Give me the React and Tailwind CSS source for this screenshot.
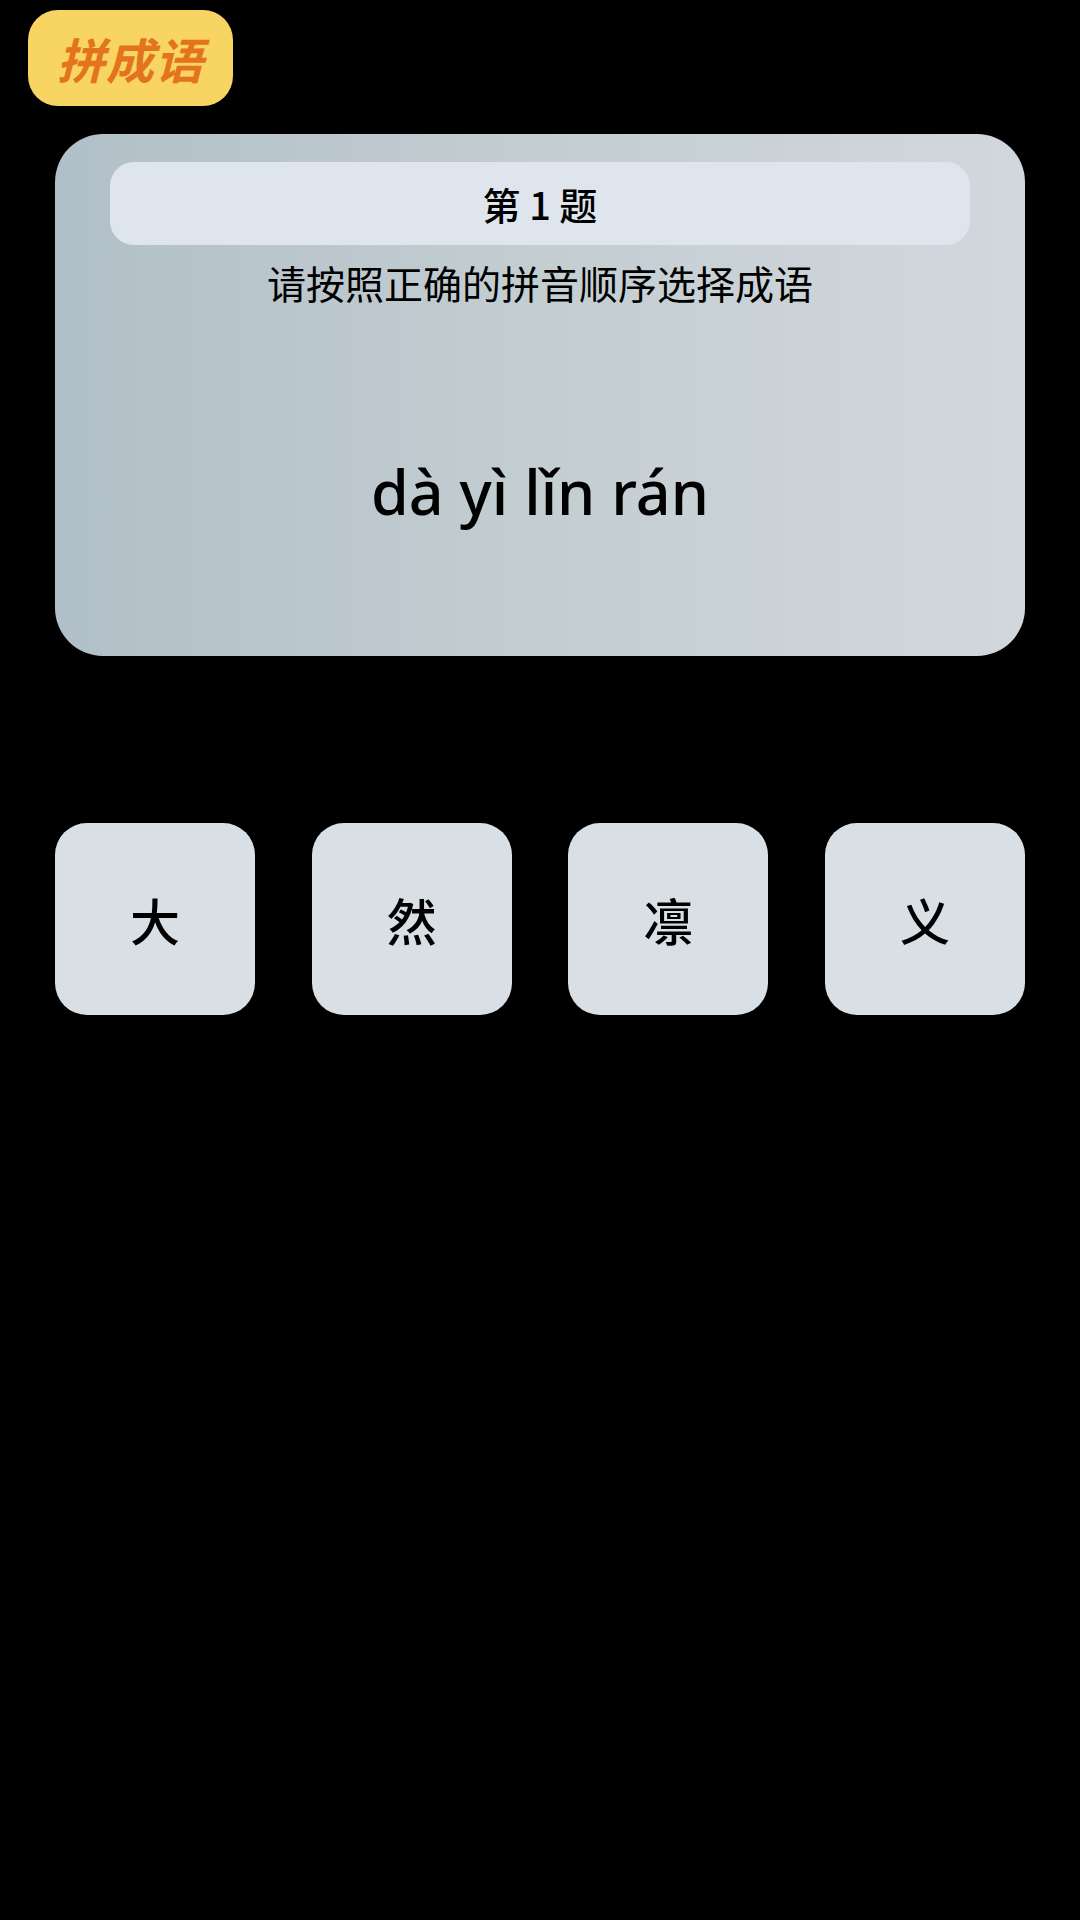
export default function App() {
  const chars = ["大", "然", "凛", "义"];
  return (
    <div
      className="w-[1080px] h-[1920px] bg-black flex flex-col px-[55px]"
      style={{ fontFamily: '"Noto Sans", "Noto Sans CJK SC", sans-serif' }}
    >
      <div className="mt-[10px] -ml-[27px] w-[205px] h-[96px] rounded-[30px] bg-[#f8d462] flex items-center justify-center">
        <span
          className="text-[48px] leading-none font-bold italic text-[#e4731e] tracking-[1px]"
          style={{ fontFamily: '"Noto Sans CJK SC", sans-serif' }}
        >
          拼成语
        </span>
      </div>

      <div className="mt-[28px] h-[522px] rounded-[48px] bg-gradient-to-r from-[#b1bfc8] via-[#c3ced1] to-[#d2d7de] flex flex-col items-center px-[55px] pt-[28px]">
        <div className="w-full h-[83px] rounded-[24px] bg-[#dfe5ed] flex items-center justify-center">
          <span
            className="text-[38px] font-medium text-black leading-none"
            style={{ fontFamily: '"Noto Sans CJK SC", sans-serif' }}
          >
            第 1 题
          </span>
        </div>
        <div
          className="mt-[11px] h-[52px] flex items-center text-[39px] text-black leading-none"
          style={{ fontFamily: '"Noto Sans CJK SC", sans-serif' }}
        >
          请按照正确的拼音顺序选择成语
        </div>
        <div className="mt-[144px] h-[80px] leading-[80px] text-[61px] font-medium text-black">
          dà yì lǐn rán
        </div>
      </div>

      <div className="mt-[167px] flex justify-between">
        {chars.map((c) => (
          <div
            key={c}
            className="w-[200px] h-[192px] rounded-[32px] bg-[#d8dfe5] flex items-center justify-center"
          >
            <span
              className="text-[50px] font-medium text-black leading-none"
              style={{ fontFamily: '"Noto Sans CJK SC", sans-serif' }}
            >
              {c}
            </span>
          </div>
        ))}
      </div>
    </div>
  );
}
